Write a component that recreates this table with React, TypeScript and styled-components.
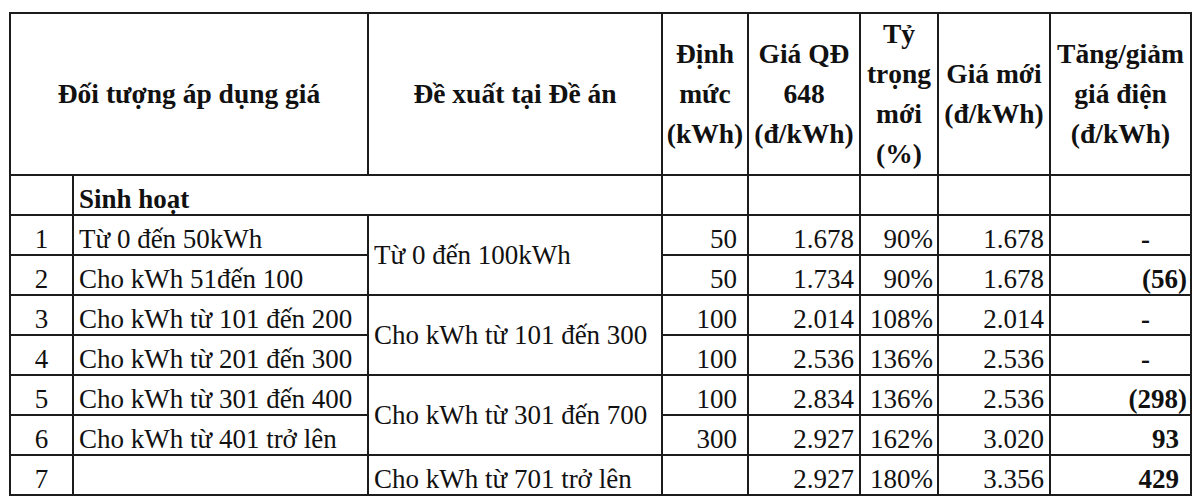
import React from "react";
import styled, { createGlobalStyle } from "styled-components";

const Global = createGlobalStyle`
  html, body { margin: 0; padding: 0; background: #ffffff; }
  body { font-family: "Liberation Serif", "Times New Roman", serif; color: #111111; }
`;

const Page = styled.div`
  padding: 12px 10px 0 9px;
  width: 1200px;
  height: 498px;
  box-sizing: border-box;
  background: #ffffff;
  overflow: hidden;
`;

const Table = styled.table`
  border-collapse: collapse;
  table-layout: fixed;
  width: 1181px;
  font-family: "Liberation Serif", "Times New Roman", serif;
  font-size: 27px;
  color: #111111;
`;

const HeadCell = styled.th`
  border: 2px solid #1c1c1c;
  font-weight: 700;
  font-size: 27.5px;
  line-height: 40px;
  text-align: center;
  vertical-align: middle;
  padding: 0;
  height: 157px;
`;

type Align = "left" | "right" | "center";

const Cell = styled.td<{ $align?: Align; $pr?: number; $bold?: boolean; $mid?: boolean }>`
  border: 2px solid #1c1c1c;
  height: 38px;
  padding: 0 ${(p) => (p.$pr ?? 5)}px 0 ${(p) => (p.$align === "left" ? 5 : 0)}px;
  text-align: ${(p) => p.$align ?? "left"};
  vertical-align: ${(p) => (p.$mid ? "middle" : "bottom")};
  font-weight: ${(p) => (p.$bold ? 700 : 400)};
  line-height: 1.12;
  white-space: nowrap;
  overflow: hidden;
`;

type Row = {
  n: string;
  name: string;
  group?: { text: string; span: number };
  dm: string;
  qd: string;
  tt: string;
  moi: string;
  diff: string;
};

const rows: Row[] = [
  { n: "1", name: "Từ 0 đến 50kWh", group: { text: "Từ 0 đến 100kWh", span: 2 }, dm: "50", qd: "1.678", tt: "90%", moi: "1.678", diff: "-" },
  { n: "2", name: "Cho kWh 51đến 100", dm: "50", qd: "1.734", tt: "90%", moi: "1.678", diff: "(56)" },
  { n: "3", name: "Cho kWh từ 101 đến 200", group: { text: "Cho kWh từ 101 đến 300", span: 2 }, dm: "100", qd: "2.014", tt: "108%", moi: "2.014", diff: "-" },
  { n: "4", name: "Cho kWh từ 201 đến 300", dm: "100", qd: "2.536", tt: "136%", moi: "2.536", diff: "-" },
  { n: "5", name: "Cho kWh từ 301 đến 400", group: { text: "Cho kWh từ 301 đến 700", span: 2 }, dm: "100", qd: "2.834", tt: "136%", moi: "2.536", diff: "(298)" },
  { n: "6", name: "Cho kWh từ 401 trở lên", dm: "300", qd: "2.927", tt: "162%", moi: "3.020", diff: "93" },
  { n: "7", name: "", group: { text: "Cho kWh từ 701 trở lên", span: 1 }, dm: "", qd: "2.927", tt: "180%", moi: "3.356", diff: "429" },
];

const diffPad = (d: string) => (d === "-" ? 40 : d.startsWith("(") ? 3 : 11);

export default function App() {
  return (
    <>
      <Global />
      <Page>
        <Table>
          <colgroup>
            <col style={{ width: 63 }} />
            <col style={{ width: 295 }} />
            <col style={{ width: 294 }} />
            <col style={{ width: 86 }} />
            <col style={{ width: 112 }} />
            <col style={{ width: 78 }} />
            <col style={{ width: 112 }} />
            <col style={{ width: 141 }} />
          </colgroup>
          <thead>
            <tr>
              <HeadCell colSpan={2}>Đối tượng áp dụng giá</HeadCell>
              <HeadCell>Đề xuất tại Đề án</HeadCell>
              <HeadCell>
                Định
                <br />
                mức
                <br />
                (kWh)
              </HeadCell>
              <HeadCell>
                Giá QĐ
                <br />
                648
                <br />
                (đ/kWh)
              </HeadCell>
              <HeadCell>
                Tỷ
                <br />
                trọng
                <br />
                mới
                <br />
                (%)
              </HeadCell>
              <HeadCell>
                Giá mới
                <br />
                (đ/kWh)
              </HeadCell>
              <HeadCell>
                Tăng/giảm
                <br />
                giá điện
                <br />
                (đ/kWh)
              </HeadCell>
            </tr>
          </thead>
          <tbody>
            <tr>
              <Cell />
              <Cell colSpan={2} $align="left" $bold>
                Sinh hoạt
              </Cell>
              <Cell />
              <Cell />
              <Cell />
              <Cell />
              <Cell />
            </tr>
            {rows.map((r) => (
              <tr key={r.n}>
                <Cell $align="center" $pr={0}>
                  {r.n}
                </Cell>
                <Cell $align="left">{r.name}</Cell>
                {r.group && (
                  <Cell $align="left" rowSpan={r.group.span} $mid={r.group.span > 1}>
                    {r.group.text}
                  </Cell>
                )}
                <Cell $align="right" $pr={10}>
                  {r.dm}
                </Cell>
                <Cell $align="right" $pr={5}>
                  {r.qd}
                </Cell>
                <Cell $align="right" $pr={4}>
                  {r.tt}
                </Cell>
                <Cell $align="right" $pr={5}>
                  {r.moi}
                </Cell>
                <Cell $align="right" $pr={diffPad(r.diff)} $bold>
                  {r.diff}
                </Cell>
              </tr>
            ))}
          </tbody>
        </Table>
      </Page>
    </>
  );
}
